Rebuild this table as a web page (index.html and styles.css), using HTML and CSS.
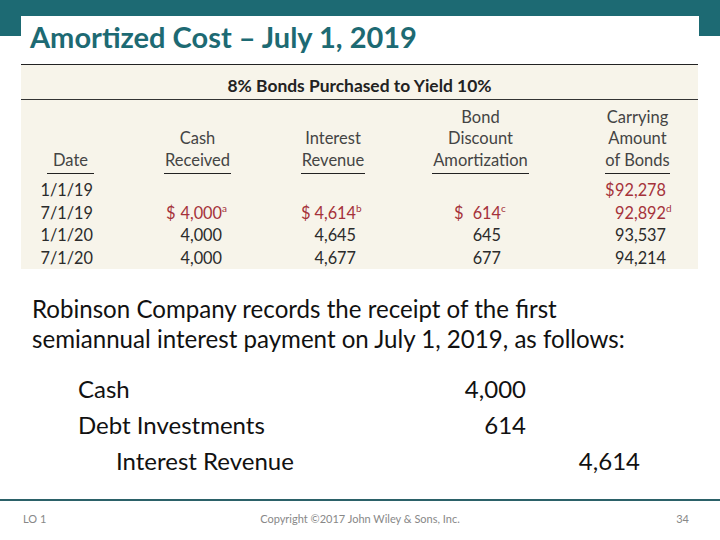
FILE: index.html
```html
<!DOCTYPE html>
<html>
<head>
<meta charset="utf-8">
<link rel="stylesheet" href="styles.css">
</head>
<body>
<div class="slide">
  <div class="header">
    <div class="titlebox"><h1 class="title">Amortized Cost – July 1, 2019</h1></div>
  </div>
  <div class="table">
    <div class="table-title">8% Bonds Purchased to Yield 10%</div>
    <div class="cols">
      <div class="col c-date">
        <div class="th"><span>Date</span></div>
        <div class="td"><span class="num">1/1/19</span></div>
        <div class="td"><span class="num">7/1/19</span></div>
        <div class="td"><span class="num">1/1/20</span></div>
        <div class="td"><span class="num">7/1/20</span></div>
      </div>
      <div class="col c-cash">
        <div class="th"><span>Cash</span><span>Received</span></div>
        <div class="td"></div>
        <div class="td red"><span>$</span><span class="num">4,000<span class="sup">a</span></span></div>
        <div class="td"><span></span><span class="num">4,000</span></div>
        <div class="td"><span></span><span class="num">4,000</span></div>
      </div>
      <div class="col c-int">
        <div class="th"><span>Interest</span><span>Revenue</span></div>
        <div class="td"></div>
        <div class="td red"><span>$</span><span class="num">4,614<span class="sup">b</span></span></div>
        <div class="td"><span></span><span class="num">4,645</span></div>
        <div class="td"><span></span><span class="num">4,677</span></div>
      </div>
      <div class="col c-bond">
        <div class="th"><span>Bond</span><span>Discount</span><span>Amortization</span></div>
        <div class="td"></div>
        <div class="td red"><span>$</span><span class="num">614<span class="sup">c</span></span></div>
        <div class="td"><span></span><span class="num">645</span></div>
        <div class="td"><span></span><span class="num">677</span></div>
      </div>
      <div class="col c-carry">
        <div class="th"><span>Carrying</span><span>Amount</span><span>of Bonds</span></div>
        <div class="td red"><span>$</span><span class="num">92,278</span></div>
        <div class="td red"><span></span><span class="num">92,892<span class="sup">d</span></span></div>
        <div class="td"><span></span><span class="num">93,537</span></div>
        <div class="td"><span></span><span class="num">94,214</span></div>
      </div>
    </div>
  </div>
  <p class="para">Robinson Company records the receipt of the first<br>semiannual interest payment on July 1, 2019, as follows:</p>
  <div class="journal">
    <span class="acct">Cash</span><span class="dr">4,000</span><span class="cr"></span>
    <span class="acct">Debt Investments</span><span class="dr">614</span><span class="cr"></span>
    <span class="acct indent">Interest Revenue</span><span class="dr"></span><span class="cr">4,614</span>
  </div>
  <div class="footer">
    <span class="lo">LO 1</span>
    <span class="copy">Copyright ©2017 John Wiley &amp; Sons, Inc.</span>
    <span class="page">34</span>
  </div>
</div>
</body>
</html>
```

FILE: styles.css
```css
html, body {
  margin: 0;
  padding: 0;
  background: #fff;
}

.slide {
  width: 720px;
  height: 540px;
  display: flex;
  flex-direction: column;
  overflow: hidden;
  font-family: Lato, "Open Sans", sans-serif;
}

.header {
  background: linear-gradient(#1d6a73 0, #1d6a73 36px, #fff 36px);
  padding: 16px 21px 0 21px;
}

.titlebox {
  background: #fff;
  height: 48px;
  padding-left: 9px;
}

.title {
  margin: 0;
  font-size: 29px;
  line-height: 42px;
  font-weight: 700;
  color: #1d6a73;
}

.table {
  margin: 0 22px 0 21px;
  border-top: 1px solid #222;
  background: #f7f4ea;
  color: #2b2b2b;
  font-size: 16.5px;
}

.table-title {
  text-align: center;
  font-weight: 700;
  font-size: 17.4px;
  line-height: 22px;
  padding: 10px 0 2px;
  border-bottom: 1px solid #333;
  color: #222;
}

.cols {
  display: flex;
}

.col {
  display: flex;
  flex-direction: column;
}

.th {
  height: 71px;
  padding-bottom: 2px;
  border-bottom: 1px solid #222;
  display: flex;
  flex-direction: column;
  justify-content: flex-end;
  align-items: center;
  line-height: 21.5px;
  color: #444;
  margin-bottom: 5px;
}

.td {
  height: 22.6px;
  line-height: 22.6px;
  display: flex;
  justify-content: space-between;
  white-space: nowrap;
}

.num {
  font-size: 16.3px;
}

.red {
  color: #a5323a;
}

.sup {
  display: inline-block;
  width: 0;
  font-size: 10px;
  line-height: 10px;
  vertical-align: 7px;
}

.c-date { width: 47px; margin-left: 26px; }
.c-date .td { justify-content: flex-end; padding-right: 1px; }

.c-cash { width: 67px; margin-left: 70px; }
.c-cash .td { padding: 0 9px 0 2px; }

.c-int { width: 64px; margin-left: 70px; }
.c-int .td { padding: 0 9px 0 0; }

.c-bond { width: 97px; margin-left: 67px; }
.c-bond .td { padding: 0 28px 0 22px; }

.c-carry { width: 65px; margin-left: 76px; }
.c-carry .td { padding: 0 4px 0 0; }

.para {
  margin: 25px 0 0 32px;
  font-size: 24.1px;
  line-height: 30px;
  color: #111;
}

.journal {
  margin: 16px 0 0 78px;
  display: grid;
  grid-template-columns: 370px 78px 114px;
  grid-auto-rows: 36px;
  align-items: center;
  font-size: 24px;
  color: #111;
}

.dr, .cr {
  text-align: right;
}

.indent {
  padding-left: 38px;
}

.footer {
  margin-top: auto;
  height: 41px;
  border-top: 2px solid #2b6168;
  display: grid;
  grid-template-columns: 1fr auto 1fr;
  align-items: start;
  padding-top: 11px;
  box-sizing: border-box;
  font-size: 11px;
  line-height: 14px;
  color: #888;
}

.lo {
  justify-self: start;
  padding-left: 23px;
}

.page {
  justify-self: end;
  padding-right: 31px;
  font-size: 11px;
}
```
